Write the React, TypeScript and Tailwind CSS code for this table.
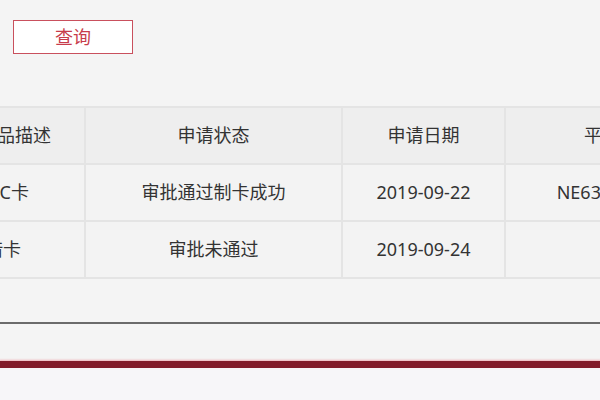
import { Fragment } from "react";

const headers = ["产品描述", "申请状态", "申请日期", "平台编号"];

const rows = [
  { name: "IC卡", pad: "pr-[55px]", status: "审批通过制卡成功", date: "2019-09-22", no: "NE6320190922" },
  { name: "借卡", pad: "pr-[63px]", status: "审批未通过", date: "2019-09-24", no: "" },
];

const cell = "flex h-[55px] items-center justify-center";

export default function App() {
  return (
    <div
      className="h-[400px] w-[600px] overflow-hidden bg-[#f4f4f4] text-[18px] text-[#333]"
      style={{ fontFamily: '"Noto Sans", "Noto Sans CJK SC", sans-serif' }}
    >
      <div className="pl-[13px] pt-[20px]">
        <button
          type="button"
          className="flex h-[34px] w-[120px] items-center justify-center border border-[#c9505d] bg-white text-[18px] text-[#c73c4b]"
        >
          查询
        </button>
      </div>

      <div className="ml-[-55px] mt-[52px] grid w-[788px] grid-cols-[139px_255px_161px_228px] gap-[2px] bg-[#e4e4e4] py-[2px]">
        <div className={`${cell} justify-end bg-[#eeeeee] pr-[33px]`}>{headers[0]}</div>
        {headers.slice(1).map((h) => (
          <div key={h} className={`${cell} bg-[#eeeeee]`}>
            {h}
          </div>
        ))}
        {rows.map((r) => (
          <Fragment key={r.name}>
            <div className={`${cell} justify-end bg-[#f3f3f3] ${r.pad}`}>{r.name}</div>
            <div className={`${cell} bg-[#f3f3f3]`}>{r.status}</div>
            <div className={`${cell} bg-[#f3f3f3]`}>{r.date}</div>
            <div className={`${cell} bg-[#f3f3f3]`}>{r.no}</div>
          </Fragment>
        ))}
      </div>

      <div className="mt-[43px] h-[2px] bg-[#6b6b6b]" />
      <div className="mt-[37px] h-[7px] bg-[#821c2b] shadow-[0_0_2px_1px_#eeb0b8]" />
      <div className="h-[40px] bg-[#f7f6f9]" />
    </div>
  );
}
